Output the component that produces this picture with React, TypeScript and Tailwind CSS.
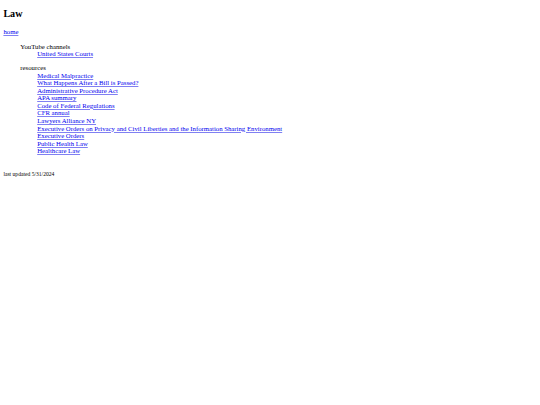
export default function App() {
  const resources = [
    "Medical Malpractice",
    "What Happens After a Bill is Passed?",
    "Administrative Procedure Act",
    "APA summary",
    "Code of Federal Regulations",
    "CFR annual",
    "Lawyers Alliance NY",
    "Executive Orders on Privacy and Civil Liberties and the Information Sharing Environment",
    "Executive Orders",
    "Public Health Law",
    "Healthcare Law",
  ];

  const link = "text-[#0000ee] underline decoration-[#8080f2]";

  return (
    <div className="min-h-[405px] bg-white px-[3.4px] py-[8.4px] font-['Liberation_Serif',serif] text-[6.75px] leading-[7.6px] text-black">
      <h1 className="mb-[8.4px] text-[10.1px] leading-[11.6px] font-bold">Law</h1>
      <a href="#" className={link}>
        home
      </a>
      <ul className="my-[6.75px] list-none pl-[16.9px]">
        <li>
          YouTube channels
          <ul className="mb-[6px] list-none pl-[16.9px]">
            <li>
              <a href="#" className={link}>
                United States Courts
              </a>
            </li>
          </ul>
        </li>
        <li>
          resources
          <ul className="list-none pl-[16.9px]">
            {resources.map((r) => (
              <li key={r}>
                <a href="#" className={link}>
                  {r}
                </a>
              </li>
            ))}
          </ul>
        </li>
      </ul>
      <p className="mt-[16px] text-[5.6px] leading-[6.5px]">last updated 5/31/2024</p>
    </div>
  );
}
